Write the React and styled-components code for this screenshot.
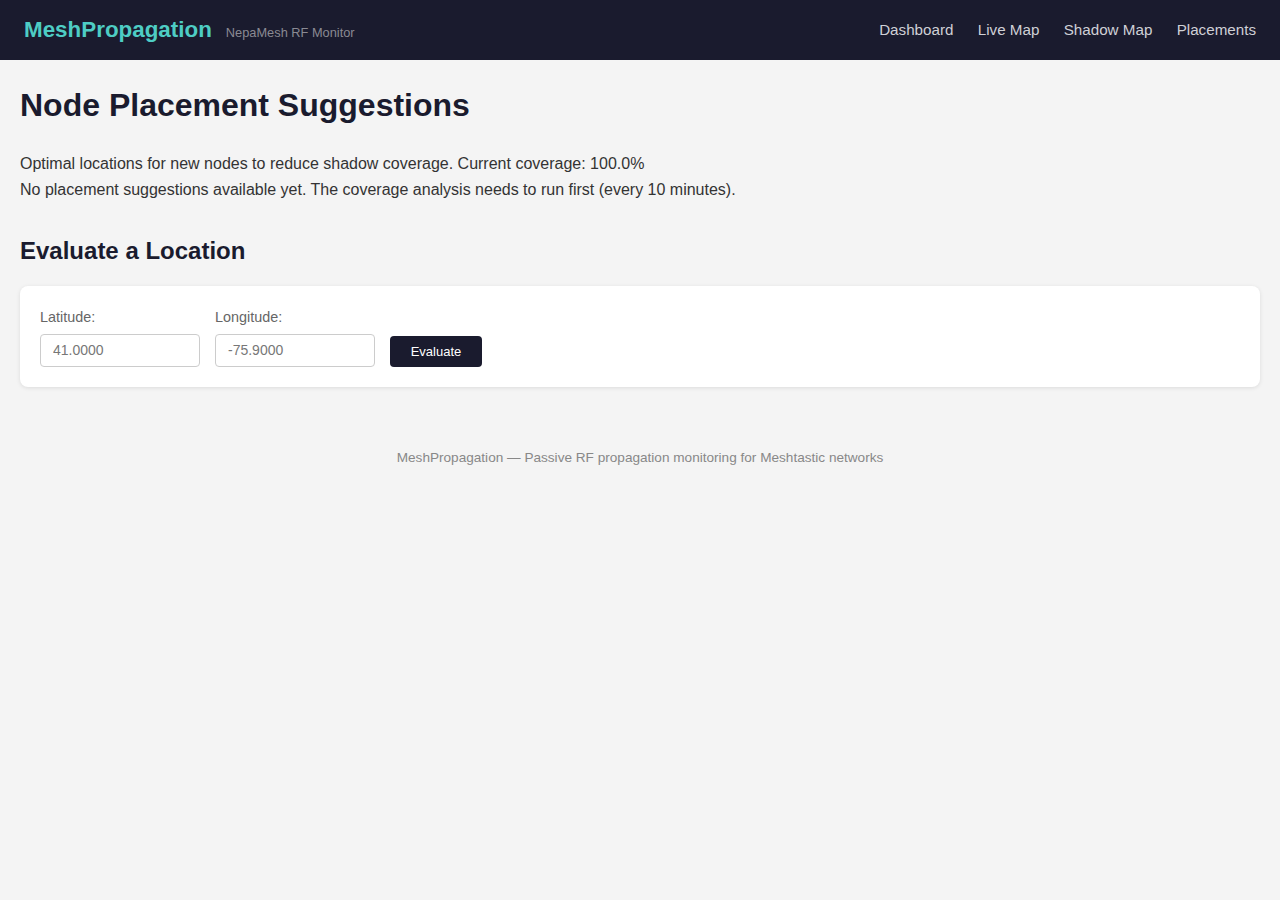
import React from "react";
import styled, { createGlobalStyle } from "styled-components";

const Global = createGlobalStyle`
  html, body { margin: 0; padding: 0; background: #f4f4f4; }
  body { font-family: "Liberation Sans", Arial, sans-serif; color: #333; line-height: 1.6; }
  * { box-sizing: border-box; }
`;

const Header = styled.header`
  height: 60px;
  background: #1a1b2e;
  display: flex;
  align-items: center;
  justify-content: space-between;
  padding: 0 24px;
`;

const Brand = styled.div`
  display: flex;
  align-items: baseline;
  gap: 14px;
`;

const Logo = styled.span`
  color: #4ecdc4;
  font-size: 22.4px;
  font-weight: 700;
`;

const Tagline = styled.span`
  color: #8a8a93;
  font-size: 12.8px;
`;

const Nav = styled.nav`
  display: flex;
  gap: 24.3px;
`;

const NavLink = styled.a`
  color: #cfd0d6;
  font-size: 15.2px;
  text-decoration: none;
`;

const Main = styled.main`
  padding: 20px 20px 0;
`;

const Title = styled.h1`
  margin: 0 0 20px;
  font-size: 32px;
  color: #1a1b2e;
`;

const Text = styled.p`
  margin: 0;
  font-size: 16px;
  color: #333;
`;

const Subtitle = styled.h2`
  margin: 30px 0 15px;
  font-size: 24px;
  color: #1a1b2e;
`;

const Card = styled.div`
  background: #fff;
  border-radius: 8px;
  box-shadow: 0 1px 4px rgba(0, 0, 0, 0.1);
  padding: 20px;
  display: flex;
  align-items: flex-end;
  gap: 15px;
`;

const Field = styled.div`
  display: flex;
  flex-direction: column;
  gap: 5px;
`;

const Label = styled.label`
  font-size: 14.4px;
  color: #666;
  line-height: 23px;
`;

const Input = styled.input`
  width: 160px;
  height: 33px;
  border: 1px solid #ccc;
  border-radius: 4px;
  padding: 0 12px;
  font-family: "Liberation Sans", Arial, sans-serif;
  font-size: 14px;
  color: #333;
  background: #fff;
  &::placeholder { color: #777; }
`;

const Button = styled.button`
  width: 92px;
  height: 31px;
  border: none;
  border-radius: 4px;
  background: #1a1b2e;
  color: #fff;
  font-family: "Liberation Sans", Arial, sans-serif;
  font-size: 13px;
  cursor: pointer;
`;

const Footer = styled.footer`
  text-align: center;
  font-size: 13.6px;
  color: #888;
  padding: 60px 0 20px;
`;

export default function App() {
  return (
    <>
      <Global />
      <Header>
        <Brand>
          <Logo>MeshPropagation</Logo>
          <Tagline>NepaMesh RF Monitor</Tagline>
        </Brand>
        <Nav>
          <NavLink href="#">Dashboard</NavLink>
          <NavLink href="#">Live Map</NavLink>
          <NavLink href="#">Shadow Map</NavLink>
          <NavLink href="#">Placements</NavLink>
        </Nav>
      </Header>
      <Main>
        <Title>Node Placement Suggestions</Title>
        <Text>Optimal locations for new nodes to reduce shadow coverage. Current coverage: 100.0%</Text>
        <Text>No placement suggestions available yet. The coverage analysis needs to run first (every 10 minutes).</Text>
        <Subtitle>Evaluate a Location</Subtitle>
        <Card>
          <Field>
            <Label>Latitude:</Label>
            <Input placeholder="41.0000" />
          </Field>
          <Field>
            <Label>Longitude:</Label>
            <Input placeholder="-75.9000" />
          </Field>
          <Button>Evaluate</Button>
        </Card>
      </Main>
      <Footer>MeshPropagation — Passive RF propagation monitoring for Meshtastic networks</Footer>
    </>
  );
}
